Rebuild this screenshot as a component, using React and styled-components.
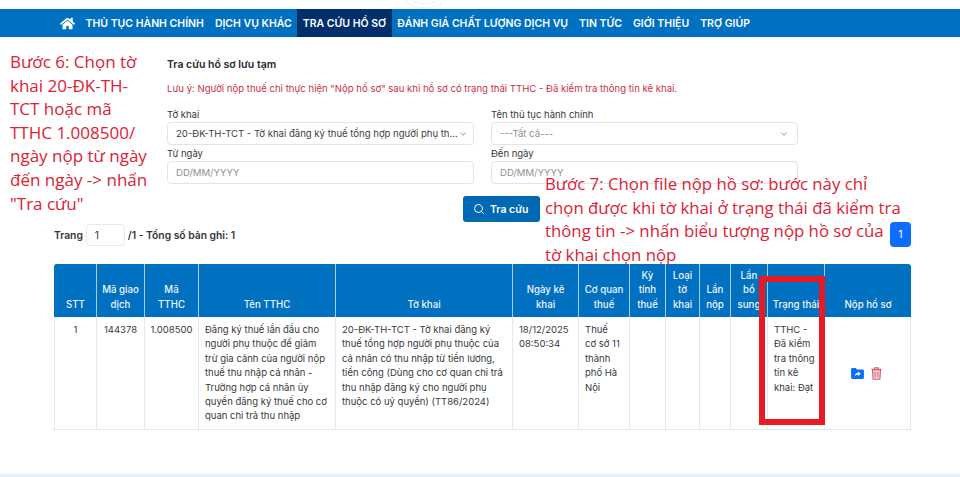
import React from "react";
import styled, { createGlobalStyle } from "styled-components";
import { FaHome } from "react-icons/fa";
import { ChevronDown, Search } from "lucide-react";

const GlobalStyle = createGlobalStyle`
  html, body {
    margin: 0;
    padding: 0;
    background: #fff;
    overflow: hidden;
  }
  * { box-sizing: border-box; }
`;

const Page = styled.div`
  position: relative;
  width: 960px;
  height: 477px;
  overflow: hidden;
  padding-top: 9px;
  font-family: Inter, "Liberation Sans", sans-serif;
  font-size: 9.6px;
  color: #2f3337;
`;

const NavBar = styled.nav`
  display: flex;
  align-items: stretch;
  height: 28px;
  padding-left: 60px;
  background: #0070c0;
`;

const HomeLink = styled.a`
  display: flex;
  align-items: center;
  padding-right: 5px;
  color: #fff;
  font-size: 15px;
`;

const NavItem = styled.a`
  display: flex;
  align-items: center;
  padding: 0 5.5px;
  color: #fff;
  font-size: 10.5px;
  font-weight: 600;
  white-space: nowrap;
  background: ${(p) => (p.$active ? "#002f6c" : "transparent")};
`;

const SearchPanel = styled.section`
  width: 631px;
  margin: 21px 0 0 167px;
`;

const PanelTitle = styled.h2`
  margin: 0;
  font-size: 10.5px;
  line-height: 14px;
  font-weight: 600;
  color: #26292c;
`;

const Notice = styled.p`
  margin: 10px 0 0;
  font-size: 9.57px;
  line-height: 14px;
  color: #c9304a;
  white-space: nowrap;
`;

const FormGrid = styled.div`
  display: grid;
  grid-template-columns: 307px 307px;
  column-gap: 17px;
  row-gap: 2px;
  margin-top: 12px;
`;

const Field = styled.label`
  display: flex;
  flex-direction: column;
`;

const FieldLabel = styled.span`
  font-size: 9.5px;
  line-height: 14px;
  color: #34383c;
`;

const Control = styled.div`
  display: flex;
  align-items: center;
  justify-content: space-between;
  height: 23px;
  padding: 0 8px;
  border: 1px solid #e2e5e8;
  border-radius: 4px;
  background: #fff;
  font-size: 9.55px;
  white-space: nowrap;
  color: ${(p) => (p.$muted ? "#8b9197" : "#3a3e42")};
  svg {
    flex: none;
    color: #7d8388;
  }
`;

const ActionRow = styled.div`
  display: flex;
  justify-content: flex-start;
  margin: 12px 0 0 296px;
`;

const SearchButton = styled.button`
  display: flex;
  align-items: center;
  gap: 5px;
  width: 77px;
  height: 26px;
  padding: 0 0 0 10px;
  border: 0;
  border-radius: 3px;
  background: #0069b4;
  color: #fff;
  font-family: inherit;
  font-size: 10.5px;
  font-weight: 600;
`;

const TableArea = styled.div`
  margin: 0 49px 0 54px;
`;

const PagerRow = styled.div`
  display: flex;
  align-items: center;
  justify-content: space-between;
  height: 25px;
`;

const PagerInfo = styled.div`
  display: flex;
  align-items: center;
  gap: 3px;
  font-size: 10.3px;
  font-weight: 600;
  color: #33373b;
`;

const PageInput = styled.div`
  display: flex;
  align-items: center;
  width: 39px;
  height: 22px;
  padding-left: 8px;
  border: 1px solid #e6e8ea;
  border-radius: 4px;
  font-weight: 400;
`;

const PageButton = styled.button`
  width: 21px;
  height: 25px;
  padding: 0;
  border: 0;
  border-radius: 4px;
  background: #0d6efd;
  color: #fff;
  font-family: inherit;
  font-size: 10.5px;
`;

const ResultTable = styled.table`
  width: 857px;
  margin-top: 17px;
  table-layout: fixed;
  border-collapse: separate;
  border-spacing: 0;
  border-bottom: 1px solid #e4e7ea;
`;

const HeadCell = styled.th`
  height: 53px;
  padding: 0 3px 5px;
  vertical-align: bottom;
  text-align: center;
  background: #0070c0;
  color: #eef5fb;
  font-size: 9.7px;
  line-height: 14.4px;
  font-weight: 500;
  white-space: pre-line;
  border-left: 1px solid ${(p) => (p.$first ? "#0070c0" : "#a9cbe6")};
  &:first-child { border-top-left-radius: 3px; }
  &:last-child { border-top-right-radius: 3px; }
`;

const BodyCell = styled.td`
  height: 112px;
  padding: 6px 8px 5px 6px;
  vertical-align: ${(p) => (p.$middle ? "middle" : "top")};
  text-align: ${(p) => (p.$center ? "center" : "left")};
  font-size: 9.5px;
  line-height: 14.4px;
  color: #35393d;
  border-left: 1px solid #e6e9ec;
  &:last-child { border-right: 1px solid #e6e9ec; }
`;

const CodeCell = styled(BodyCell)`
  padding-left: 2px;
  padding-right: 2px;
`;

const ActionIcons = styled.div`
  display: flex;
  align-items: center;
  justify-content: center;
  gap: 7px;
`;

const TopArcs = styled.svg`
  position: absolute;
  left: 385px;
  top: 0;
`;

const BottomStrip = styled.div`
  position: absolute;
  left: 0;
  right: 0;
  bottom: 0;
  height: 3px;
  background: #e6eff9;
`;

const StepNote = styled.div`
  position: absolute;
  left: ${(p) => p.$left}px;
  top: ${(p) => p.$top}px;
  width: ${(p) => p.$width}px;
  font-family: "Open Sans", "Liberation Sans", sans-serif;
  font-size: ${(p) => p.$size}px;
  line-height: 23.6px;
  color: #dc2136;
`;

const Highlight = styled.div`
  position: absolute;
  left: 759px;
  top: 276px;
  width: 66px;
  height: 149px;
  border: 6.5px solid #e81b25;
`;

const FolderIcon = () => (
  <svg width="13" height="11" viewBox="0 0 14 12">
    <path
      fill="#0d6efd"
      d="M1.3 0H5l1.4 1.6h6.3c.7 0 1.3.6 1.3 1.3v7.8c0 .7-.6 1.3-1.3 1.3H1.3C.6 12 0 11.400 0 10.700V1.300C0 .6.6 0 1.300 0z"
    />
    <path
      fill="#fff"
      d="M7.600 3.900 10.600 6.300 7.600 8.700V7.300C6 7.300 4.900 7.800 4 9c.2-2 1.500-3.500 3.600-3.700z"
    />
  </svg>
);

const TrashIcon = () => (
  <svg width="11" height="13" viewBox="0 0 12 14" fill="none" stroke="#d0606c">
    <path strokeWidth="1.2" d="M0.500 2.500H11.500M4 2.300V.8H8V2.300" />
    <path strokeWidth="1.2" fill="#f3d3d6" d="M1.600 2.800 2.300 13.300H9.700L10.400 2.800z" />
    <path strokeWidth="1" d="M4.500 5V11M7.500 5V11" />
  </svg>
);

const NAV_ITEMS = [
  "THỦ TỤC HÀNH CHÍNH",
  "DỊCH VỤ KHÁC",
  "TRA CỨU HỒ SƠ",
  "ĐÁNH GIÁ CHẤT LƯỢNG DỊCH VỤ",
  "TIN TỨC",
  "GIỚI THIỆU",
  "TRỢ GIÚP",
];

const COLUMNS = [
  { title: "STT", width: 42 },
  { title: "Mã giao\ndịch", width: 48 },
  { title: "Mã\nTTHC", width: 54 },
  { title: "Tên TTHC", width: 137 },
  { title: "Tờ khai", width: 177 },
  { title: "Ngày kê\nkhai", width: 66 },
  { title: "Cơ quan\nthuế", width: 51 },
  { title: "Kỳ\ntính\nthuế", width: 36 },
  { title: "Loại\ntờ\nkhai", width: 34 },
  { title: "Lần\nnộp", width: 31 },
  { title: "Lần\nbổ\nsung", width: 37 },
  { title: "Trạng thái", width: 57 },
  { title: "Nộp hồ sơ", width: 87 },
];

export default function App() {
  return (
    <Page>
      <GlobalStyle />
      <TopArcs width="80" height="9" viewBox="0 0 80 9" fill="none" stroke="#eaf0f7">
        <circle cx="40" cy="-22" r="30" />
        <circle cx="40" cy="-22" r="26" />
      </TopArcs>
      <NavBar>
        <HomeLink>
          <FaHome />
        </HomeLink>
        {NAV_ITEMS.map((item) => (
          <NavItem key={item} $active={item === "TRA CỨU HỒ SƠ"}>
            {item}
          </NavItem>
        ))}
      </NavBar>

      <SearchPanel>
        <PanelTitle>Tra cứu hồ sơ lưu tạm</PanelTitle>
        <Notice>
          Lưu ý: Người nộp thuế chỉ thực hiện "Nộp hồ sơ" sau khi hồ sơ có trạng
          thái TTHC - Đã kiểm tra thông tin kê khai.
        </Notice>
        <FormGrid>
          <Field>
            <FieldLabel>Tờ khai</FieldLabel>
            <Control>
              20-ĐK-TH-TCT - Tờ khai đăng ký thuế tổng hợp người phụ th...
              <ChevronDown size={10} />
            </Control>
          </Field>
          <Field>
            <FieldLabel>Tên thủ tục hành chính</FieldLabel>
            <Control $muted>
              ---Tất cả---
              <ChevronDown size={10} />
            </Control>
          </Field>
          <Field>
            <FieldLabel>Từ ngày</FieldLabel>
            <Control $muted>DD/MM/YYYY</Control>
          </Field>
          <Field>
            <FieldLabel>Đến ngày</FieldLabel>
            <Control $muted>DD/MM/YYYY</Control>
          </Field>
        </FormGrid>
        <ActionRow>
          <SearchButton>
            <Search size={12} color="#fff" />
            Tra cứu
          </SearchButton>
        </ActionRow>
      </SearchPanel>

      <TableArea>
        <PagerRow>
          <PagerInfo>
            Trang <PageInput>1</PageInput> /1 - Tổng số bản ghi: 1
          </PagerInfo>
          <PageButton>1</PageButton>
        </PagerRow>
        <ResultTable>
          <colgroup>
            {COLUMNS.map((c) => (
              <col key={c.title} width={c.width} />
            ))}
          </colgroup>
          <thead>
            <tr>
              {COLUMNS.map((c, i) => (
                <HeadCell key={c.title} $first={i === 0}>
                  {c.title}
                </HeadCell>
              ))}
            </tr>
          </thead>
          <tbody>
            <tr>
              <CodeCell $center>1</CodeCell>
              <CodeCell $center>144378</CodeCell>
              <CodeCell $center>1.008500</CodeCell>
              <BodyCell>
                Đăng ký thuế lần đầu cho người phụ thuộc để giảm trừ gia cảnh
                của người nộp thuế thu nhập cá nhân - Trường hợp cá nhân ủy
                quyền đăng ký thuế cho cơ quan chi trả thu nhập
              </BodyCell>
              <BodyCell>
                20-ĐK-TH-TCT - Tờ khai đăng ký thuế tổng hợp người phụ thuộc của
                cá nhân có thu nhập từ tiền lương, tiền công (Dùng cho cơ quan
                chi trả thu nhập đăng ký cho người phụ thuộc có uỷ quyền)
                (TT86/2024)
              </BodyCell>
              <BodyCell>18/12/2025 08:50:34</BodyCell>
              <BodyCell>Thuế cơ sở 11 thành phố Hà Nội</BodyCell>
              <BodyCell />
              <BodyCell />
              <BodyCell />
              <BodyCell />
              <BodyCell>TTHC - Đã kiểm tra thông tin kê khai: Đạt</BodyCell>
              <BodyCell $middle>
                <ActionIcons>
                  <FolderIcon />
                  <TrashIcon />
                </ActionIcons>
              </BodyCell>
            </tr>
          </tbody>
        </ResultTable>
      </TableArea>

      <StepNote $left={10} $top={50} $width={143} $size={17}>
        Bước 6: Chọn tờ khai 20-ĐK-TH-TCT hoặc mã TTHC 1.008500/ ngày nộp từ
        ngày đến ngày -&gt; nhấn "Tra cứu"
      </StepNote>
      <StepNote $left={545} $top={172} $width={358} $size={16.8}>
        Bước 7: Chọn file nộp hồ sơ: bước này chỉ chọn được khi tờ khai ở trạng
        thái đã kiểm tra thông tin -&gt; nhấn biểu tượng nộp hồ sơ của tờ khai
        chọn nộp
      </StepNote>
      <Highlight />
      <BottomStrip />
    </Page>
  );
}
